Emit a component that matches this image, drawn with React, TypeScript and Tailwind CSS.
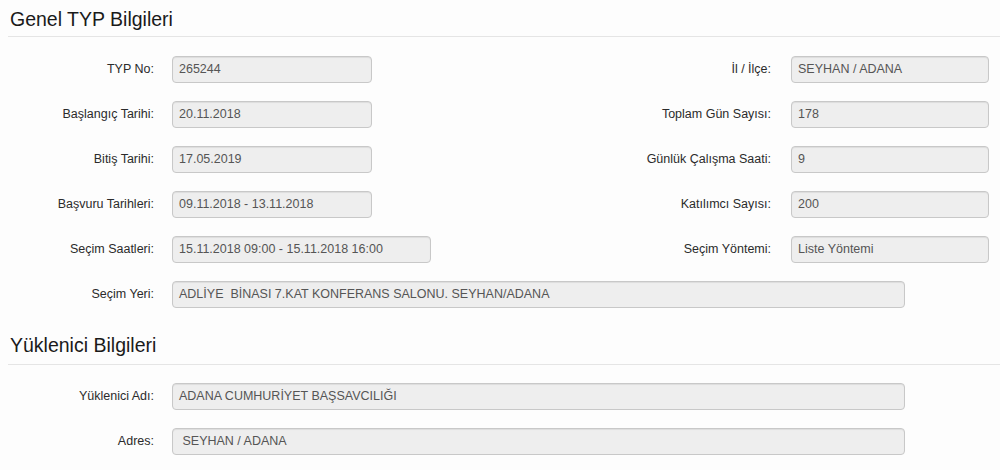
const font = { fontFamily: '"Liberation Sans", Arial, sans-serif' };

type Row = {
  label: string;
  value: string;
  width: string;
  right?: { label: string; value: string };
};

const genel: Row[] = [
  { label: "TYP No:", value: "265244", width: "w-[200px]", right: { label: "İl / İlçe:", value: "SEYHAN / ADANA" } },
  { label: "Başlangıç Tarihi:", value: "20.11.2018", width: "w-[200px]", right: { label: "Toplam Gün Sayısı:", value: "178" } },
  { label: "Bitiş Tarihi:", value: "17.05.2019", width: "w-[200px]", right: { label: "Günlük Çalışma Saati:", value: "9" } },
  { label: "Başvuru Tarihleri:", value: "09.11.2018 - 13.11.2018", width: "w-[200px]", right: { label: "Katılımcı Sayısı:", value: "200" } },
  { label: "Seçim Saatleri:", value: "15.11.2018 09:00 - 15.11.2018 16:00", width: "w-[259px]", right: { label: "Seçim Yöntemi:", value: "Liste Yöntemi" } },
  { label: "Seçim Yeri:", value: "ADLİYE  BİNASI 7.KAT KONFERANS SALONU. SEYHAN/ADANA", width: "w-[733px]" },
];

const yuklenici: Row[] = [
  { label: "Yüklenici Adı:", value: "ADANA CUMHURİYET BAŞSAVCILIĞI", width: "w-[733px]" },
  { label: "Adres:", value: " SEYHAN / ADANA", width: "w-[733px]" },
];

function Field({ value, width }: { value: string; width: string }) {
  return (
    <div
      className={`${width} h-[27px] flex items-center px-[6px] rounded-[4px] border border-[#c8c8c8] bg-[#eeeeee] text-[#555] whitespace-pre shadow-[inset_0_1px_1px_rgba(0,0,0,0.075)]`}
    >
      {value}
    </div>
  );
}

function FormRows({ rows }: { rows: Row[] }) {
  return (
    <div className="flex flex-col gap-[18px]">
      {rows.map((r) => (
        <div key={r.label} className="flex items-center">
          <div className="w-[146px] text-right text-[#2b2b2b]">{r.label}</div>
          <div className="ml-[18px]">
            <Field value={r.value} width={r.width} />
          </div>
          {r.right && (
            <div className="ml-auto flex items-center mr-[11px]">
              <div className="text-right text-[#2b2b2b]">{r.right.label}</div>
              <div className="ml-[20px]">
                <Field value={r.right.value} width="w-[198px]" />
              </div>
            </div>
          )}
        </div>
      ))}
    </div>
  );
}

function SectionTitle({ children, pb }: { children: string; pb: string }) {
  return (
    <div className={`border-b border-[#e5e5e5] ${pb}`}>
      <h4 className="pl-[2px] text-[19.5px] leading-[21px] text-[#1a1a1a]">{children}</h4>
    </div>
  );
}

export default function App() {
  return (
    <div className="min-h-[470px] w-[1000px] bg-[#fdfdfd] pl-2 text-[12.5px]" style={font}>
      <div className="pt-[9px]">
        <SectionTitle pb="pb-[6px]">Genel TYP Bilgileri</SectionTitle>
      </div>
      <div className="pt-[19px]">
        <FormRows rows={genel} />
      </div>
      <div className="pt-[27px]">
        <SectionTitle pb="pb-[8px]">Yüklenici Bilgileri</SectionTitle>
      </div>
      <div className="pt-[18px]">
        <FormRows rows={yuklenici} />
      </div>
    </div>
  );
}
